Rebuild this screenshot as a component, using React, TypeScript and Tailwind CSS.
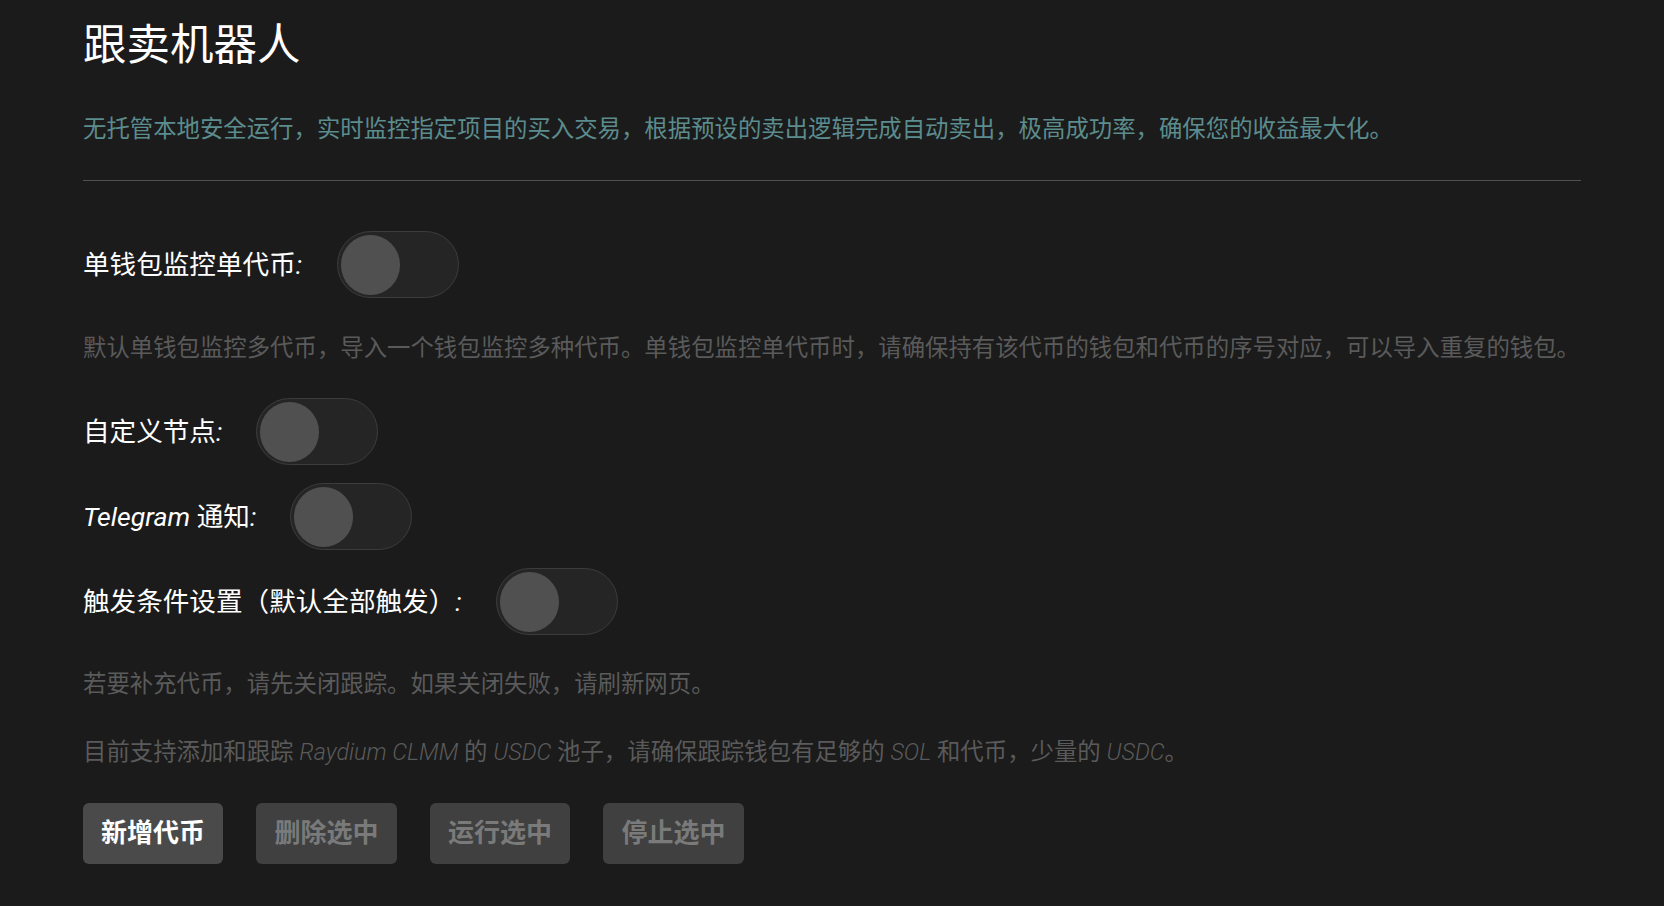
import { useState } from "react";

interface SwitchRow {
  id: string;
  label: React.ReactNode;
}

const ROWS_AFTER_NOTE: SwitchRow[] = [
  { id: "node", label: <>自定义节点<i>:</i></> },
  {
    id: "tg",
    label: (
      <>
        <i>Telegram</i> 通知<i>:</i>
      </>
    ),
  },
  { id: "trigger", label: <>触发条件设置（默认全部触发）<i>:</i></> },
];

function Toggle({ on, onClick }: { on: boolean; onClick: () => void }) {
  return (
    <button
      onClick={onClick}
      className="relative w-[122px] h-[67px] shrink-0 rounded-full border border-[#3c3c3c] bg-[#252525]"
    >
      <span
        className={`absolute top-[3px] w-[59px] h-[60px] rounded-full bg-[#505050] transition-all ${
          on ? "left-[58px]" : "left-[3px]"
        }`}
      />
    </button>
  );
}

export default function App() {
  const [switches, setSwitches] = useState<Record<string, boolean>>({});
  const flip = (id: string) => setSwitches((s) => ({ ...s, [id]: !s[id] }));

  return (
    <div
      className="min-h-screen bg-[#1b1b1b] px-[83px] pt-[21px] pb-10 text-white"
      style={{ fontFamily: 'Roboto, "Noto Sans CJK SC", sans-serif' }}
    >
      {/* Header */}
      <h1 className="text-[43.5px] leading-[50px] font-normal">跟卖机器人</h1>
      <p className="mt-[42px] text-[23.4px] leading-[32px] text-[#5b8c8e]">
        无托管本地安全运行，实时监控指定项目的买入交易，根据预设的卖出逻辑完成自动卖出，极高成功率，确保您的收益最大化。
      </p>
      <div className="mt-[35px] border-t border-[#505050]" />

      {/* Switches */}
      <div className="mt-[50px] flex items-center gap-[35px]">
        <span className="text-[26.6px]">单钱包监控单代币<i>:</i></span>
        <Toggle on={!!switches.single} onClick={() => flip("single")} />
      </div>
      <p className="mt-[34px] text-[23.4px] leading-[32px] text-[#5a5a5a]">
        默认单钱包监控多代币，导入一个钱包监控多种代币。单钱包监控单代币时，请确保持有该代币的钱包和代币的序号对应，可以导入重复的钱包。
      </p>

      <div className="mt-[34px] flex flex-col gap-[18px]">
        {ROWS_AFTER_NOTE.map((row) => (
          <div key={row.id} className="flex items-center gap-[34px]">
            <span className="text-[26.6px]">{row.label}</span>
            <Toggle on={!!switches[row.id]} onClick={() => flip(row.id)} />
          </div>
        ))}
      </div>

      {/* Notes */}
      <p className="mt-[33px] text-[23.4px] leading-[32px] text-[#5a5a5a]">
        若要补充代币，请先关闭跟踪。如果关闭失败，请刷新网页。
      </p>
      <p className="mt-[36px] text-[23.4px] leading-[32px] text-[#5a5a5a]">
        目前支持添加和跟踪 <i className="font-light">Raydium CLMM</i> 的{" "}
        <i className="font-light">USDC</i> 池子，请确保跟踪钱包有足够的{" "}
        <i className="font-light">SOL</i> 和代币，少量的{" "}
        <i className="font-light">USDC</i>。
      </p>

      {/* Actions */}
      <div className="mt-[35px] flex gap-[33px]">
        <button className="h-[61px] w-[140px] rounded-md bg-[#4a4a4a] text-[26px] font-bold text-white">
          新增代币
        </button>
        <button className="h-[61px] w-[141px] rounded-md bg-[#404040] text-[26px] font-bold text-[#7a7a7a]">
          删除选中
        </button>
        <button className="h-[61px] w-[140px] rounded-md bg-[#404040] text-[26px] font-bold text-[#7a7a7a]">
          运行选中
        </button>
        <button className="h-[61px] w-[141px] rounded-md bg-[#404040] text-[26px] font-bold text-[#7a7a7a]">
          停止选中
        </button>
      </div>
    </div>
  );
}
